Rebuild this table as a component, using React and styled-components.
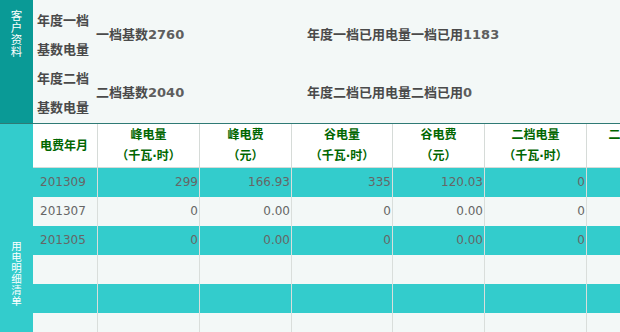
import React from 'react';
import styled, { createGlobalStyle } from 'styled-components';

const Global = createGlobalStyle`
  html, body { margin: 0; padding: 0; overflow: hidden; background: #f3f8f7; }
  body { font-family: "DejaVu Sans", "Noto Sans CJK SC", sans-serif; }
`;

const Page = styled.div`
  width: 680px;
`;

const Section = styled.section`
  display: grid;
  grid-template-columns: 33px 1fr;
  border-bottom: ${(p) => (p.$divided ? '1px solid #2f7a75' : 'none')};
`;

const Side = styled.div`
  background: ${(p) => (p.$tone === 'dark' ? '#0a9a96' : '#33cccc')};
  color: #fff;
  font-family: "Noto Sans CJK SC", sans-serif;
  font-size: ${(p) => p.$fs}px;
  padding-top: ${(p) => p.$top}px;
  display: flex;
  flex-direction: column;
  align-items: center;
`;

const SideChar = styled.span`
  display: block;
  height: ${(p) => p.$lh}px;
  line-height: ${(p) => p.$lh}px;
`;

const Info = styled.div`
  padding: 6px 0 1px;
`;

const InfoRow = styled.div`
  display: grid;
  grid-template-columns: 63px 211px 1fr;
  align-items: center;
  height: 58px;
  color: #4a4a4a;
  font-size: 13px;
  font-weight: bold;
`;

const InfoLabel = styled.div`
  padding-left: 4px;
  line-height: 29px;
`;

const InfoLine = styled.span`
  display: block;
`;

const InfoValue = styled.div`
  line-height: 20px;
  white-space: nowrap;
`;

const Num = styled.span`
  color: #5e5e5e;
`;

const COLS = '65px 102px 92px 101px 92px 102px 92px';

const Table = styled.div`
  display: flex;
  flex-direction: column;
`;

const HeadRow = styled.div`
  display: grid;
  grid-template-columns: ${COLS};
  height: 44px;
  box-sizing: border-box;
  background: #fff;
  border-bottom: 1px solid #d6dbd8;
`;

const HeadCell = styled.div`
  box-sizing: border-box;
  border-right: 1px solid #d6dbd8;
  display: flex;
  flex-direction: column;
  justify-content: center;
  align-items: ${(p) => (p.$left ? 'flex-start' : 'center')};
  padding-left: ${(p) => (p.$left ? '7px' : '0')};
  padding-top: 1px;
  color: #006600;
  font-size: 12px;
  font-weight: bold;
  line-height: 21px;
  white-space: nowrap;
`;

const DataRow = styled.div`
  display: grid;
  grid-template-columns: ${COLS};
  height: 29px;
  background: ${(p) => (p.$alt ? '#33cccc' : '#f3f8f7')};
`;

const DataCell = styled.div`
  box-sizing: border-box;
  border-right: 1px solid #d9dedb;
  font-size: 12px;
  line-height: 29px;
  color: #666;
  text-align: ${(p) => (p.$left ? 'left' : 'right')};
  padding: ${(p) => (p.$left ? '0 0 0 7px' : '0 1px 0 0')};
  white-space: nowrap;
  overflow: hidden;
`;

const vertical = (text, lh) =>
  text.split('').map((c, i) => (
    <SideChar key={i} $lh={lh}>
      {c}
    </SideChar>
  ));

const headers = [
  ['电费年月'],
  ['峰电量', '（千瓦·时）'],
  ['峰电费', '（元）'],
  ['谷电量', '（千瓦·时）'],
  ['谷电费', '（元）'],
  ['二档电量', '（千瓦·时）'],
  ['二档电费', '（元）'],
];

const rows = [
  ['201309', '299', '166.93', '335', '120.03', '0', '0.00'],
  ['201307', '0', '0.00', '0', '0.00', '0', '0.00'],
  ['201305', '0', '0.00', '0', '0.00', '0', '0.00'],
  ['', '', '', '', '', '', ''],
  ['', '', '', '', '', '', ''],
  ['', '', '', '', '', '', ''],
];

export default function App() {
  return (
    <Page>
      <Global />
      <Section $divided>
        <Side $tone="dark" $fs={11.5} $top={9}>{vertical('客户资料', 12)}</Side>
        <Info>
          <InfoRow>
            <InfoLabel><InfoLine>年度一档</InfoLine><InfoLine>基数电量</InfoLine></InfoLabel>
            <InfoValue>一档基数<Num>2760</Num></InfoValue>
            <InfoValue>年度一档已用电量一档已用<Num>1183</Num></InfoValue>
          </InfoRow>
          <InfoRow>
            <InfoLabel><InfoLine>年度二档</InfoLine><InfoLine>基数电量</InfoLine></InfoLabel>
            <InfoValue>二档基数<Num>2040</Num></InfoValue>
            <InfoValue>年度二档已用电量二档已用<Num>0</Num></InfoValue>
          </InfoRow>
        </Info>
      </Section>
      <Section>
        <Side $tone="light" $fs={10.5} $top={116}>{vertical('用电明细清单', 11)}</Side>
        <Table>
          <HeadRow>
            {headers.map((h, i) => (
              <HeadCell key={i} $left={i === 0}>
                {h.map((l, j) => <span key={j}>{l}</span>)}
              </HeadCell>
            ))}
          </HeadRow>
          {rows.map((r, i) => (
            <DataRow key={i} $alt={i % 2 === 0}>
              {r.map((v, j) => (
                <DataCell key={j} $left={j === 0}>{v}</DataCell>
              ))}
            </DataRow>
          ))}
        </Table>
      </Section>
    </Page>
  );
}
